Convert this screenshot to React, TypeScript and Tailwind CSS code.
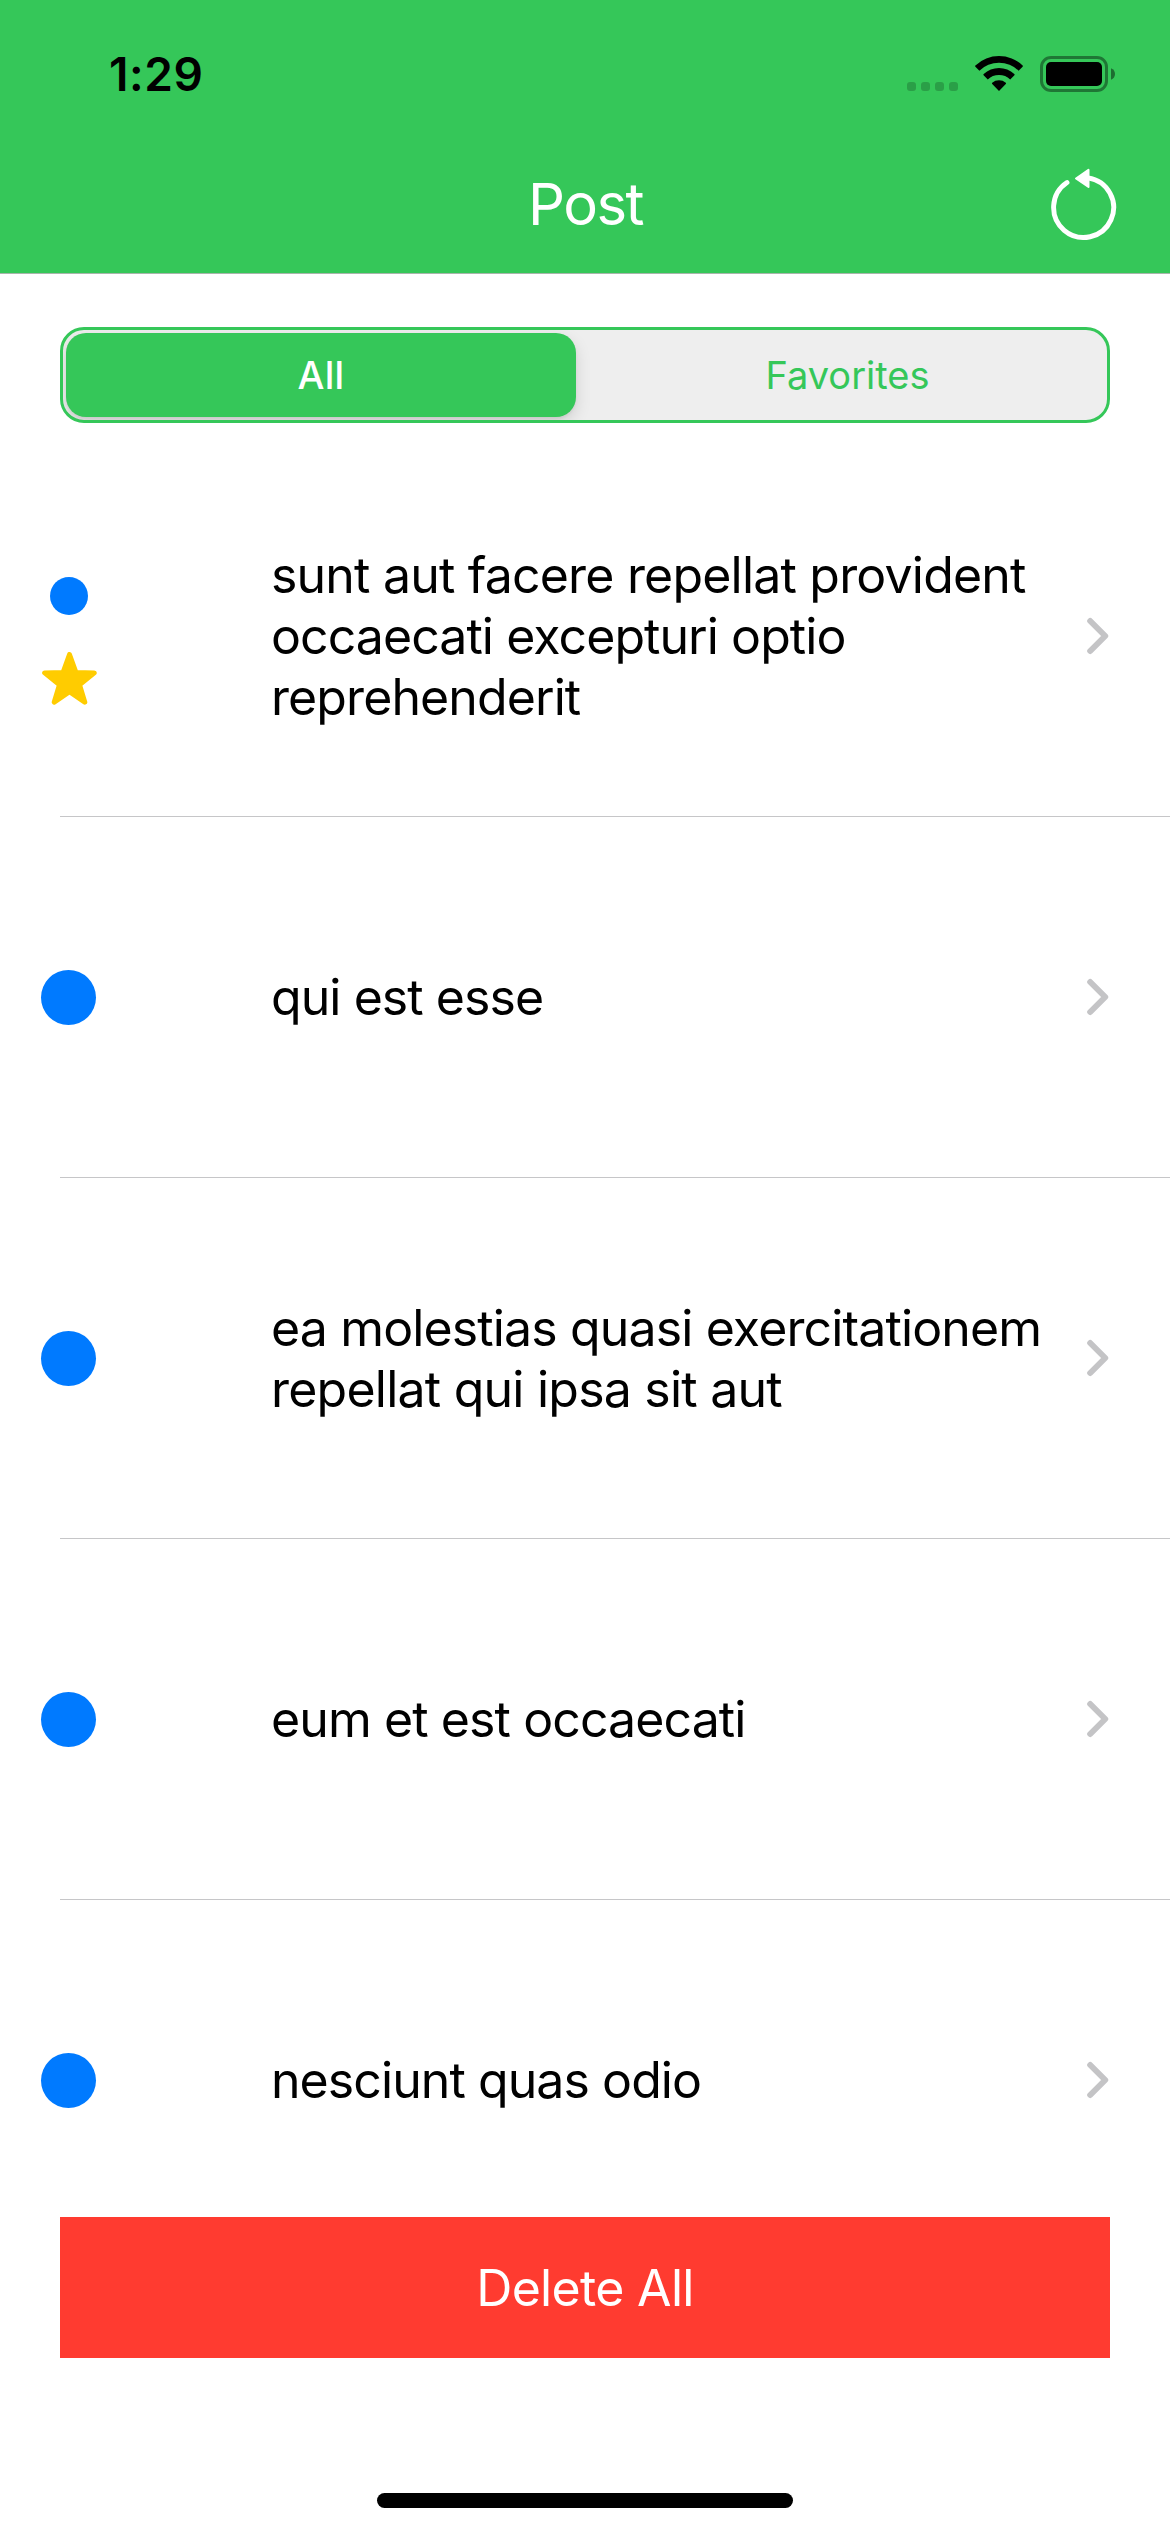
import { useState } from "react";

type Line = { text: string; tracking: string };
type Post = { lines: Line[]; favorite?: boolean };

const posts: Post[] = [
  {
    favorite: true,
    lines: [
      { text: "sunt aut facere repellat provident", tracking: "tracking-[-0.8px]" },
      { text: "occaecati excepturi optio", tracking: "tracking-[-0.93px]" },
      { text: "reprehenderit", tracking: "tracking-[-0.9px]" },
    ],
  },
  { lines: [{ text: "qui est esse", tracking: "tracking-[-0.93px]" }] },
  {
    lines: [
      { text: "ea molestias quasi exercitationem", tracking: "tracking-[-0.86px]" },
      { text: "repellat qui ipsa sit aut", tracking: "tracking-[-0.77px]" },
    ],
  },
  { lines: [{ text: "eum et est occaecati", tracking: "tracking-[-0.9px]" }] },
  { lines: [{ text: "nesciunt quas odio", tracking: "tracking-[-0.92px]" }] },
];

function StatusBar() {
  return (
    <div className="flex h-[141px] items-start justify-between pr-[54px] pl-[109px]">
      <span className="mt-[46px] text-[46px] leading-[56px] font-semibold tracking-[0.57px] text-black">
        1:29
      </span>
      <div className="mt-[55px] flex h-[37px] items-start">
        <div className="mt-[27px] mr-[17px] flex gap-[5px]">
          {[0, 1, 2, 3].map((i) => (
            <span key={i} className="size-[9px] rounded-[3px] bg-black/20" />
          ))}
        </div>
        <svg width="48" height="36" viewBox="0 0 48 36" className="mr-[17px]">
          <path d="M0.4 10.4A34.4 34.4 0 0 1 47.6 10.4Q48.3 11.1 47.6 11.8L43.6 15.8A28 28 0 0 0 4.4 15.8L0.4 11.8Q-0.3 11.1 0.4 10.4Z" />
          <path d="M8.7 19A22.6 22.6 0 0 1 39.3 19Q40 19.6 39.4 20.2L35.2 24.6A16.2 16.2 0 0 0 12.8 24.6L8.6 20.2Q8 19.6 8.7 19Z" />
          <path d="M17.2 27.8A10.6 10.6 0 0 1 30.8 27.8Q31.4 28.4 30.8 29L24 35.9L17.2 29Q16.6 28.4 17.2 27.8Z" />
        </svg>
        <svg width="76" height="36" viewBox="0 0 76 36" className="mt-px">
          <rect x="1.5" y="1.5" width="65" height="33" rx="9.5" fill="none" stroke="#000" strokeOpacity="0.4" strokeWidth="3" />
          <rect x="6" y="6" width="56" height="24" rx="5" />
          <path d="M71 12.2Q75 14 75 18T71 23.8Z" fillOpacity="0.45" />
        </svg>
      </div>
    </div>
  );
}

function RefreshIcon() {
  return (
    <svg width="68" height="76" viewBox="0 0 68 76">
      <path d="M17 15.5A30 30 0 1 0 38 10.8" fill="none" stroke="#fff" strokeWidth="4.9" strokeLinecap="round" />
      <path d="M26 11.5L38.5 2.8V19.9Z" fill="#fff" stroke="#fff" strokeWidth="2" strokeLinejoin="round" />
    </svg>
  );
}

function Star() {
  return (
    <svg width="55" height="53" viewBox="0 0 55 53">
      <path
        d="M27.5 2.5L34 20.5L52.3 20.9L37.5 32.8L42.8 50.2L27.5 39.6L12.2 50.2L17.5 32.8L2.7 20.9L21 20.5Z"
        fill="#fc0"
        stroke="#fc0"
        strokeWidth="5"
        strokeLinejoin="round"
      />
    </svg>
  );
}

function Row({ post }: { post: Post }) {
  return (
    <li className="flex h-[361px] shrink-0">
      <div className="flex w-[60px] shrink-0 items-center">
        <div className="ml-[41px] flex w-[55px] shrink-0 flex-col items-center">
          {post.favorite ? (
            <>
              <span className="mt-10 mb-[37px] size-[38px] rounded-full bg-[#007aff]" />
              <div className="mb-8 ml-[2px]">
                <Star />
              </div>
            </>
          ) : (
            <span className="size-[55px] rounded-full bg-[#007aff]" />
          )}
        </div>
      </div>
      <div className="flex flex-1 items-center border-b border-[#c6c6c8] pr-[60px] pl-[211px]">
        <div className="mt-px flex-1 text-[50px] leading-[60.67px] whitespace-nowrap text-black">
          {post.lines.map((line) => (
            <div key={line.text} className={line.tracking}>
              {line.text}
            </div>
          ))}
        </div>
        <svg width="23" height="38" viewBox="0 0 23 38" fill="none" className="shrink-0">
          <path d="M3.2 4L18.2 19L3.2 34" stroke="#c4c4c6" strokeWidth="6" strokeLinecap="round" strokeLinejoin="round" />
        </svg>
      </div>
    </li>
  );
}

export default function App() {
  const [tab, setTab] = useState<"all" | "favorites">("all");
  const visible = tab === "all" ? posts : posts.filter((p) => p.favorite);

  return (
    <div className="flex h-[2532px] w-[1170px] flex-col overflow-hidden bg-white font-['Inter',sans-serif]">
      <header className="h-[274px] shrink-0 border-b border-[#a8b5ab] bg-[#35c759]">
        <StatusBar />
        <div className="grid h-[132px] grid-cols-[1fr_auto_1fr] items-start pr-[52px]">
          <h1 className="col-start-2 mt-[28px] ml-[53px] text-[58px] leading-[70px] tracking-[-1.5px] text-white">
            Post
          </h1>
          <button className="mt-[26px] justify-self-end">
            <RefreshIcon />
          </button>
        </div>
      </header>

      <div className="mx-[60px] mt-[53px] flex h-24 shrink-0 overflow-hidden rounded-[24px] border-3 border-[#35c759] bg-[#eee] p-[3px] text-[38px] leading-[46px]">
        <button
          onClick={() => setTab("all")}
          className="h-[84px] w-[510px] rounded-[20px] bg-[#35c759] font-medium tracking-[0.24px] text-white shadow-[0_6px_16px_rgba(0,0,0,0.13),0_2px_3px_rgba(0,0,0,0.06)]"
        >
          All
        </button>
        <button onClick={() => setTab("favorites")} className="flex-1 pl-[15px] text-[#35c759]">
          Favorites
        </button>
      </div>

      <ul className="mt-[33px] flex h-[1761px] shrink-0 flex-col overflow-hidden">
        {visible.map((post) => (
          <Row key={post.lines[0].text} post={post} />
        ))}
      </ul>

      <button className="mx-[60px] h-[141px] shrink-0 bg-[#ff3b30] pt-[2px] text-[50px] tracking-[-0.68px] text-white">
        Delete All
      </button>

      <div className="mt-[135px] h-[15px] w-[416px] shrink-0 self-center rounded-full bg-black" />
    </div>
  );
}
